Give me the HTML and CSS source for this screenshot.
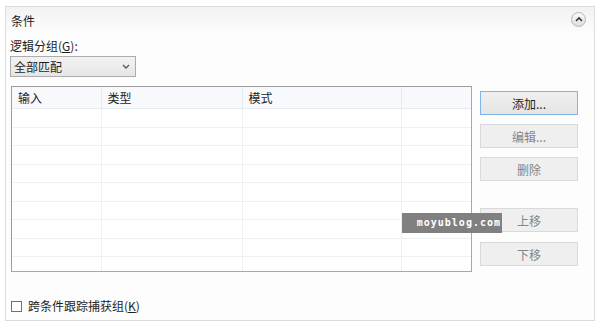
FILE: index.html
```html
<!DOCTYPE html>
<html lang="zh-CN">
<head>
    <meta charset="UTF-8">
    <title>条件</title>
    <link rel="stylesheet" href="styles.css">
</head>
<body>
    <div class="panel">
        <div class="panel-head">
            <span class="panel-title">条件</span>
            <span class="collapse">
                <svg width="8" height="6" viewBox="0 0 8 6"><path d="M1 5 L4 2 L7 5" fill="none" stroke="#333" stroke-width="1.6"/></svg>
            </span>
        </div>
        <div class="panel-body">
            <div class="field-label">逻辑分组(<u>G</u>):</div>
            <div class="select">
                <span>全部匹配</span>
                <svg width="8" height="5" viewBox="0 0 8 5"><path d="M1 1 L4 4 L7 1" fill="none" stroke="#555" stroke-width="1.3"/></svg>
            </div>

            <div class="main">
                <div class="list">
                    <table class="grid">
                        <colgroup>
                            <col style="width:89px">
                            <col style="width:141px">
                            <col style="width:159px">
                            <col>
                        </colgroup>
                        <thead>
                            <tr><th>输入</th><th>类型</th><th>模式</th><th></th></tr>
                        </thead>
                        <tbody>
                            <tr><td></td><td></td><td></td><td></td></tr>
                            <tr><td></td><td></td><td></td><td></td></tr>
                            <tr><td></td><td></td><td></td><td></td></tr>
                            <tr><td></td><td></td><td></td><td></td></tr>
                            <tr><td></td><td></td><td></td><td></td></tr>
                            <tr><td></td><td></td><td></td><td></td></tr>
                            <tr><td></td><td></td><td></td><td></td></tr>
                            <tr><td></td><td></td><td></td><td></td></tr>
                            <tr><td></td><td></td><td></td><td></td></tr>
                        </tbody>
                    </table>
                </div>
                <div class="actions">
                    <button class="btn btn-default">添加...</button>
                    <button class="btn" disabled>编辑...</button>
                    <button class="btn" disabled>删除</button>
                    <button class="btn btn-gap" disabled>上移</button>
                    <button class="btn" disabled>下移</button>
                </div>
            </div>

            <label class="check">
                <span class="box"></span>
                <span>跨条件跟踪捕获组(<u>K</u>)</span>
            </label>
        </div>
        <div class="watermark">moyublog.com</div>
    </div>
</body>
</html>
```

FILE: styles.css
```css
body {
    margin: 0;
    background: #fff;
    font-family: 'Noto Sans CJK SC', 'Noto Sans', sans-serif;
    font-size: 12px;
    color: #1e1e1e;
}
.panel {
    position: relative;
    margin: 6px 5px 0 5px;
    height: 313px;
    border: 1px solid #dcdcdc;
    background: #fdfdfd;
}
.panel-head {
    height: 26px;
    display: flex;
    align-items: center;
    justify-content: space-between;
    padding: 0 8px 0 5px;
    background: linear-gradient(#f2f2f2, #fcfcfc);
}
.panel-title {
    line-height: 16px;
    margin-top: 2px;
}
.collapse {
    width: 13px;
    height: 13px;
    border: 1px solid #b4b4b4;
    border-radius: 50%;
    background: linear-gradient(#fafafa, #dedede);
    display: flex;
    align-items: center;
    justify-content: center;
    margin-top: -2px;
}
.panel-body {
    padding: 0 4px;
}
.field-label {
    margin-top: 5px;
    line-height: 16px;
}
.field-label u, .check u {
    text-decoration-thickness: 1px;
}
.select {
    margin-top: 2px;
    width: 116px;
    height: 19px;
    border: 1px solid #acacac;
    background: linear-gradient(#f2f2f2, #e6e6e6);
    display: flex;
    align-items: center;
    justify-content: space-between;
    padding: 0 5px 0 3px;
}
.main {
    display: flex;
    margin-top: 9px;
}
.list {
    margin-left: 1px;
    width: 459px;
    height: 184px;
    border: 1px solid #9c9c9c;
    border-right-color: #a8a8a8;
    border-bottom-color: #a8a8a8;
    overflow: hidden;
    background: #fff;
}
.grid {
    width: 100%;
    table-layout: fixed;
    border-collapse: collapse;
}
.grid th {
    height: 21px;
    padding: 0 0 0 6px;
    text-align: left;
    font-weight: normal;
    background: #f7f9fc;
    border-right: 1px solid #e6eaf0;
    border-bottom: 1px solid #e8ecf2;
}
.grid td {
    height: 17.5px;
    padding: 0;
    border-right: 1px solid #eef0f3;
    border-bottom: 1px solid #eef0f3;
}
.grid th:last-child, .grid td:last-child {
    border-right: none;
}
.actions {
    display: flex;
    flex-direction: column;
    gap: 9px;
    margin-left: 8px;
    padding-top: 5px;
}
.btn {
    width: 98px;
    height: 24px;
    font-family: inherit;
    font-size: 12px;
    border: 1px solid #d9d9d9;
    background: #efefef;
    color: #858585;
    padding: 0;
}
.btn:last-child {
    margin-top: 1px;
}
.btn-default {
    border-color: #7eb4ea;
    background: linear-gradient(#f0f0f0, #e5e5e5);
    color: #1e1e1e;
}
.btn-gap {
    margin-top: 18px;
}
.check {
    display: flex;
    align-items: center;
    gap: 6px;
    margin-top: 26px;
    margin-left: 1px;
    line-height: 16px;
}
.box {
    width: 9px;
    height: 9px;
    border: 1px solid #707070;
    background: #fff;
}
.watermark {
    position: absolute;
    left: 396px;
    top: 206px;
    width: 100px;
    height: 20px;
    background: #808080;
    color: #fff;
    font-family: 'DejaVu Sans Mono', monospace;
    font-size: 10px;
    font-weight: bold;
    letter-spacing: 1px;
    line-height: 20px;
    text-align: right;
    padding-right: 1px;
    box-sizing: border-box;
}
```
